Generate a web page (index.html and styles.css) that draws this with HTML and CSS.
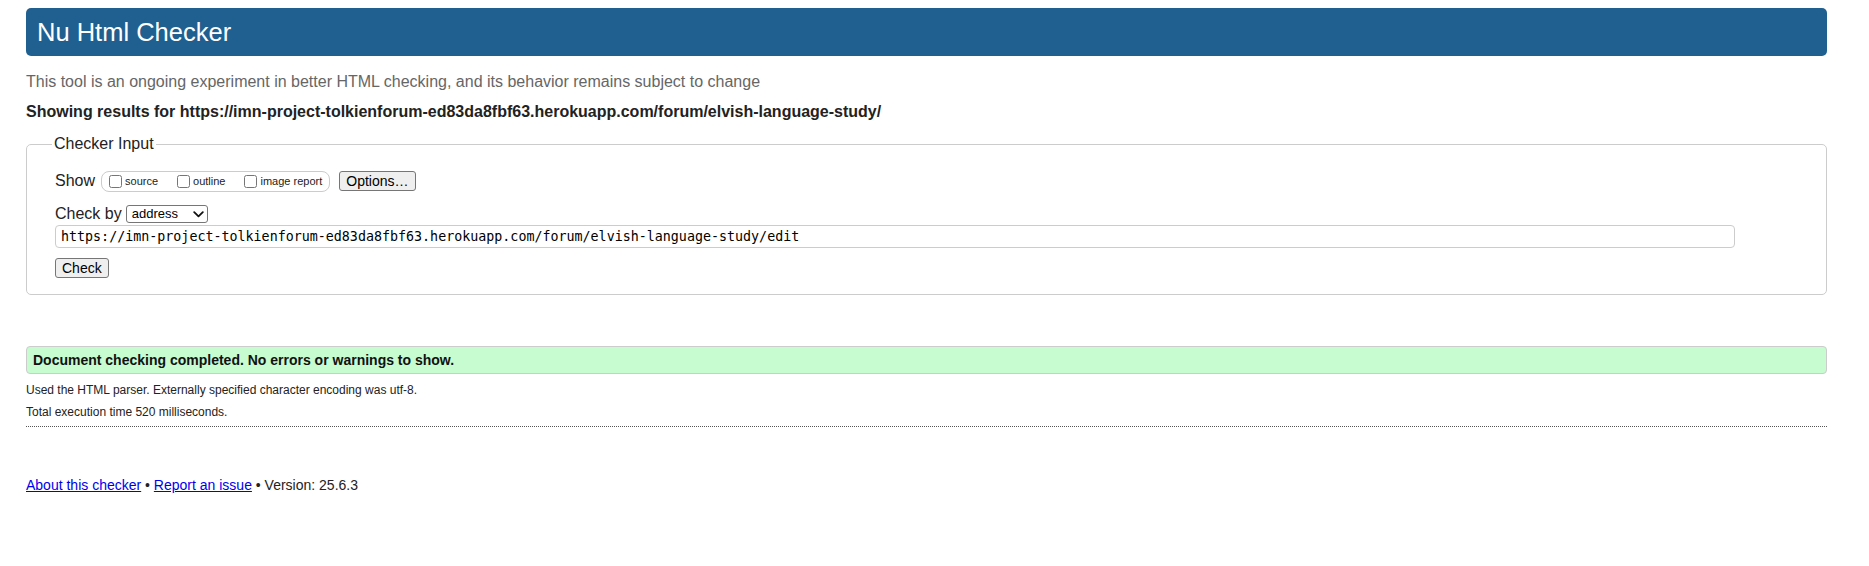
FILE: index.html
```html
<!DOCTYPE html>
<html lang="en">
<head>
<meta charset="utf-8">
<title>Showing results for https://imn-project-tolkienforum-ed83da8fbf63.herokuapp.com/forum/elvish-language-study/ - Nu Html Checker</title>
<link rel="stylesheet" href="styles.css">
</head>
<body>
<h1 class="title">Nu Html Checker</h1>
<p class="tagline">This tool is an ongoing experiment in better HTML checking, and its behavior remains subject to change</p>
<p class="results-for">Showing results for https://imn-project-tolkienforum-ed83da8fbf63.herokuapp.com/forum/elvish-language-study/</p>
<form class="checker-form">
  <fieldset class="checker-input">
    <legend class="checker-legend">Checker Input</legend>
    <div class="show-row">
      <span class="row-label">Show</span>
      <div class="show-group">
        <label class="opt"><input type="checkbox" class="cb">source</label>
        <label class="opt"><input type="checkbox" class="cb">outline</label>
        <label class="opt"><input type="checkbox" class="cb">image report</label>
      </div>
      <button type="button" class="btn">Options…</button>
    </div>
    <div class="checkby-row">
      <span class="row-label">Check by</span>
      <span class="sel-wrap">
        <select class="sel"><option>address</option></select>
        <svg class="chev" width="11" height="7" viewBox="0 0 11 7" aria-hidden="true"><path d="M1.2 1.2 L5.5 5.4 L9.8 1.2" fill="none" stroke="#111" stroke-width="1.8" stroke-linecap="round" stroke-linejoin="round"/></svg>
      </span>
    </div>
    <div class="url-row">
      <input type="text" class="url" value="https://imn-project-tolkienforum-ed83da8fbf63.herokuapp.com/forum/elvish-language-study/edit">
    </div>
    <div class="submit-row">
      <button type="button" class="btn btn-check">Check</button>
    </div>
  </fieldset>
</form>
<div class="success">Document checking completed. No errors or warnings to show.</div>
<p class="details">Used the HTML parser. Externally specified character encoding was utf-8.</p>
<p class="details details-next">Total execution time 520 milliseconds.</p>
<hr class="dotted">
<p class="footer"><a href="#" class="link">About this checker</a> • <a href="#" class="link">Report an issue</a> • Version: 25.6.3</p>
</body>
</html>
```

FILE: styles.css
```css
html, body {
  background: #fff;
}
body {
  margin: 0;
  padding: 8px 42px 40px 26px;
  font-family: "Liberation Sans", Arial, Helvetica, sans-serif;
  color: #222;
}
.title {
  margin: 0;
  height: 48px;
  line-height: 48px;
  padding: 0 11px;
  background: #206091;
  color: #fff;
  font-size: 25.5px;
  font-weight: normal;
  border-radius: 5px;
}
.tagline {
  margin: 17px 0 0;
  color: #666;
  font-size: 16px;
  line-height: 18px;
}
.results-for {
  margin: 12px 0 0;
  font-size: 16px;
  line-height: 18px;
  font-weight: bold;
  color: #222;
}
.checker-form {
  margin: 14px 0 0;
}
.checker-input {
  margin: 0;
  border: 1px solid #ccc;
  border-radius: 5px;
  padding: 0 28px 16px;
  min-width: 0;
}
.checker-legend {
  padding: 0 2px;
  margin-left: -3px;
  font-size: 16px;
  line-height: 18px;
  color: #222;
}
.row-label {
  font-size: 16px;
  line-height: 18px;
}
.show-row {
  display: flex;
  align-items: center;
  margin-top: 17px;
  height: 22px;
}
.show-group {
  display: flex;
  align-items: center;
  height: 19px;
  border: 1px solid #ccc;
  border-radius: 8px;
  padding: 0 7px;
  gap: 19px;
  margin: 0 9px 0 6px;
}
.opt {
  display: flex;
  align-items: center;
  font-size: 11px;
  color: #222;
}
.cb {
  width: 13px;
  height: 13px;
  margin: 0 3px 0 0;
}
.btn {
  font-family: "Liberation Sans", Arial, sans-serif;
  font-size: 14px;
  line-height: 16px;
  height: 20px;
  padding: 0 6px;
  background: #efefef;
  border: 1px solid #767676;
  border-radius: 3px;
  color: #000;
}
.checkby-row {
  display: flex;
  align-items: center;
  height: 18px;
  margin-top: 13px;
}
.sel-wrap {
  position: relative;
  display: inline-flex;
  margin-left: 4px;
}
.sel {
  -webkit-appearance: none;
  appearance: none;
  font-family: "Liberation Sans", Arial, sans-serif;
  font-size: 13px;
  height: 18px;
  line-height: 16px;
  padding: 0 0 0 5px;
  width: 82px;
  border: 1px solid #767676;
  border-radius: 3px;
  background: #fff;
  color: #000;
}
.chev {
  position: absolute;
  right: 4px;
  top: 6px;
  pointer-events: none;
}
.url-row {
  margin-top: 2px;
}
.url {
  box-sizing: border-box;
  display: block;
  width: 1680px;
  height: 23px;
  border: 1px solid #ccc;
  border-radius: 4px;
  padding: 0 5px;
  font-family: "DejaVu Sans Mono", "Liberation Mono", monospace;
  font-size: 13.33px;
  color: #000;
}
.submit-row {
  margin-top: 10px;
  display: flex;
}
.success {
  margin-top: 51px;
  height: 28px;
  box-sizing: border-box;
  line-height: 26px;
  padding: 0 6px;
  background: #c6fcd0;
  border: 1px solid #ccc;
  border-radius: 4px;
  font-size: 14px;
  font-weight: bold;
  color: #111;
}
.details {
  margin: 9px 0 0;
  font-size: 12px;
  line-height: 14px;
  color: #222;
}
.details-next {
  margin-top: 8px;
}
.dotted {
  margin: 7px 0 0;
  border: 0;
  border-top: 1px dotted #555;
  height: 0;
}
.footer {
  margin: 50px 0 0;
  font-size: 14px;
  line-height: 16px;
  color: #222;
}
.link {
  color: #0000ee;
  text-decoration: underline;
}
```
